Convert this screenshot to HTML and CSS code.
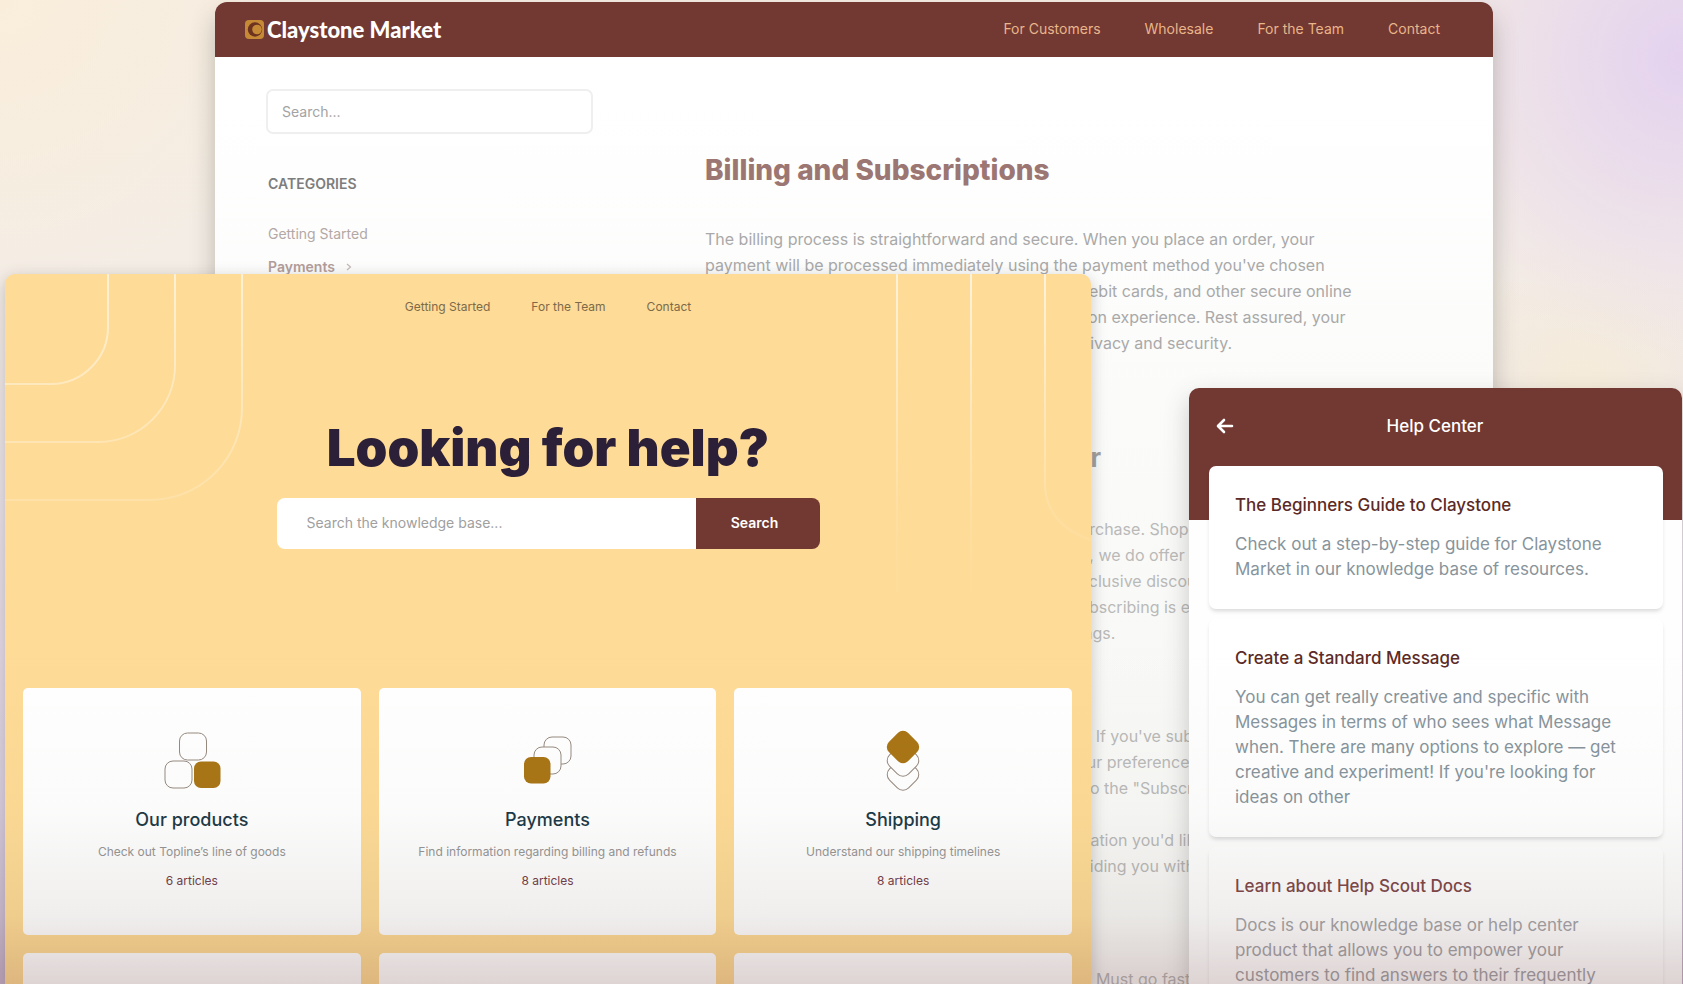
FILE: index.html
```html
<!DOCTYPE html>
<html lang="en">
<head>
  <meta charset="UTF-8">
  <meta name="viewport" content="width=device-width, initial-scale=1.0">
  <title>Claystone Market Help</title>
  <link rel="stylesheet" href="styles.css">
</head>
<body>
  <div class="desktop">

    <!-- Article window -->
    <section class="window market">
      <header class="market-header">
        <a href="#" class="logo">
          <svg width="19" height="19" viewBox="0 0 19 19">
            <rect width="19" height="19" rx="4" fill="#c68a36"/>
            <circle cx="10" cy="9.5" r="7.2" fill="#6d3320"/>
            <circle cx="12" cy="9.5" r="4.8" fill="#c68a36"/>
          </svg>
          <span>Claystone Market</span>
        </a>
        <nav class="market-nav">
          <a href="#">For Customers</a>
          <a href="#">Wholesale</a>
          <a href="#">For the Team</a>
          <a href="#">Contact</a>
        </nav>
      </header>
      <div class="market-body">
        <aside class="sidebar">
          <input type="text" class="sidebar-search" placeholder="Search..." aria-label="Search">
          <h2 class="sidebar-title">CATEGORIES</h2>
          <ul class="categories">
            <li><a href="#">Getting Started</a></li>
            <li class="active">
              <a href="#">Payments</a>
              <svg width="6" height="8" viewBox="0 0 6 8" fill="none" stroke="#c4b9b8" stroke-width="1.2"><path d="M1 1l3.5 3L1 7"/></svg>
            </li>
          </ul>
        </aside>
        <article class="article">
          <h1>Billing and Subscriptions</h1>
          <p>The billing process is straightforward and secure. When you place an order, your<br>
            payment will be processed immediately using the payment method you've chosen<br>
            from all the available choices. We take credit and debit cards, and other secure online<br>
            checkout services to ensure you a simple transaction experience. Rest assured, your<br>
            details will be handled under the utmost care for privacy and security.</p>
          <h2>Is any subscription required for</h2>
          <p class="light">A membership is never needed to complete any purchase. Shop<br>
            as much as you wish without any commitment. Still, we do offer<br>
            bundles that offer members priority access plus exclusive discount<br>
            offers across your favourites you love the most. Subscribing is easy,<br>
            simple, flexible and can bring you some great savings.</p>
          <p class="light change">Yes, you can change your order whenever you like. If you've sub<br>
            scribed to our monthly box, feel free to manage your preferences<br>
            in your account. Sign in to your account and head to the "Subscriptions"</p>
          <p class="light contact">Please contact us about if there is any other information you'd like<br>
            to know more about, and we are committed to providing you with</p>
          <p class="light delivery">Packages will be shipped with our trusted couriers. Must go fast</p>
        </article>
      </div>
    </section>

    <!-- Knowledge base window -->
    <section class="window docs">
      <svg class="lines-left" width="240" height="230" viewBox="0 0 240 230" fill="none" stroke="url(#fade-left)" stroke-width="2">
        <defs>
          <linearGradient id="fade-left" gradientUnits="userSpaceOnUse" x1="0" y1="0" x2="0" y2="230">
            <stop offset="0" stop-color="#fff" stop-opacity=".6"/>
            <stop offset="1" stop-color="#fff" stop-opacity=".16"/>
          </linearGradient>
        </defs>
        <path d="M103 0V53A57 57 0 0 1 46 110H0"/>
        <path d="M170 0V91A77 77 0 0 1 93 168H0"/>
        <path d="M237 0V134A92 92 0 0 1 145 226H0"/>
      </svg>
      <svg class="lines-right" width="200" height="340" viewBox="0 0 200 340" fill="none" stroke="url(#fade-right)" stroke-width="2">
        <defs>
          <linearGradient id="fade-right" gradientUnits="userSpaceOnUse" x1="0" y1="0" x2="0" y2="340">
            <stop offset="0" stop-color="#fff" stop-opacity=".65"/>
            <stop offset=".7" stop-color="#fff" stop-opacity=".12"/>
            <stop offset="1" stop-color="#fff" stop-opacity="0"/>
          </linearGradient>
        </defs>
        <path d="M6 0V340"/>
        <path d="M80 0V340"/>
        <path d="M154 0V209C154 238 172 257 200 266"/>
      </svg>
      <nav class="docs-nav">
        <a href="#">Getting Started</a>
        <a href="#">For the Team</a>
        <a href="#">Contact</a>
      </nav>
      <h1 class="docs-title">Looking for help?</h1>
      <form class="docs-search">
        <input type="text" placeholder="Search the knowledge base..." aria-label="Search the knowledge base">
        <button type="button">Search</button>
      </form>
      <div class="cards">
        <a href="#" class="card">
          <svg width="64" height="64" viewBox="0 0 64 64" fill="none" stroke="#978a80">
            <rect x="19.500" y="4" width="27" height="27" rx="8"/>
            <rect x="5" y="32" width="27" height="27" rx="8"/>
            <rect x="34" y="32.5" width="26.5" height="26.5" rx="7" fill="#a97516" stroke="none"/>
          </svg>
          <h2>Our products</h2>
          <p>Check out Topline’s line of goods</p>
          <span>6 articles</span>
        </a>
        <a href="#" class="card">
          <svg width="64" height="64" viewBox="0 0 64 64" stroke="#978a80">
            <rect x="29" y="8" width="27" height="27" rx="8" fill="#fff"/>
            <rect x="19" y="18" width="27" height="27" rx="8" fill="#fff"/>
            <rect x="9" y="28" width="26.5" height="26.5" rx="7" fill="#a97516" stroke="none"/>
          </svg>
          <h2>Payments</h2>
          <p>Find information regarding billing and refunds</p>
          <span>8 articles</span>
        </a>
        <a href="#" class="card">
          <svg width="64" height="64" viewBox="0 0 64 64" stroke="#978a80">
            <rect x="18.5" y="32" width="27" height="27" rx="8" fill="#fff" transform="rotate(45 32 45.5)"/>
            <rect x="18.5" y="18" width="27" height="27" rx="8" fill="#fff" transform="rotate(45 32 31.5)"/>
            <rect x="18.5" y="4.5" width="27" height="27" rx="7" fill="#a97516" stroke="none" transform="rotate(45 32 18)"/>
          </svg>
          <h2>Shipping</h2>
          <p>Understand our shipping timelines</p>
          <span>8 articles</span>
        </a>
        <div class="card"></div>
        <div class="card"></div>
        <div class="card"></div>
      </div>
    </section>

    <!-- Help center widget -->
    <section class="window help">
      <header class="help-header">
        <button type="button" class="back" aria-label="Back">
          <svg width="18" height="16" viewBox="0 0 18 16" fill="none" stroke="#fff" stroke-width="2.6" stroke-linecap="round" stroke-linejoin="round"><path d="M8 2L2 8l6 6M2.500 8H16"/></svg>
        </button>
        <h2>Help Center</h2>
      </header>
      <div class="help-list">
        <a href="#" class="help-card">
          <h3>The Beginners Guide to Claystone</h3>
          <p>Check out a step-by-step guide for Claystone Market in our knowledge base of resources.</p>
        </a>
        <a href="#" class="help-card">
          <h3>Create a Standard Message</h3>
          <p>You can get really creative and specific with Messages in terms of who sees what Message when. There are many options to explore — get creative and experiment! If you're looking for ideas on other</p>
        </a>
        <a href="#" class="help-card faded">
          <h3>Learn about Help Scout Docs</h3>
          <p>Docs is our knowledge base or help center product that allows you to empower your customers to find answers to their frequently</p>
        </a>
      </div>
    </section>

    <div class="shade"></div>
  </div>
</body>
</html>
```
FILE: styles.css
```css
* {
  box-sizing: border-box;
}

body {
  margin: 0;
  font-family: Inter, "Liberation Sans", sans-serif;
}

h1, h2, h3, p, ul {
  margin: 0;
  padding: 0;
}

a {
  color: inherit;
  text-decoration: none;
}

input, button {
  font-family: inherit;
  border: none;
  outline: none;
}

.desktop {
  position: relative;
  height: 100vh;
  overflow: hidden;
  background:
    radial-gradient(circle at 100% 6%, #e4d2ef 0, rgba(228, 210, 239, 0) 300px),
    radial-gradient(circle at 0 0, #faeedb 0, rgba(250, 238, 219, 0) 300px),
    radial-gradient(circle at 94% 40%, #f6ecd9 0, rgba(246, 236, 217, 0) 160px),
    linear-gradient(to bottom, #f5ede3 0, #f4ede6 28%, #eae2e8 50%, #dfd4e4 80%, #d2c0da 100%);
}

.window {
  position: absolute;
  bottom: 0;
  overflow: hidden;
}

/* market */

.market {
  top: 2px;
  left: 215px;
  right: 190px;
  border-radius: 12px 12px 0 0;
  background: linear-gradient(to bottom, #fff 10%, #fbfbfa 40%, #f8f8f6 70%);
  box-shadow: 0 14px 24px rgba(70, 70, 60, 0.32);
}

.market-header {
  display: flex;
  align-items: center;
  justify-content: space-between;
  height: 55px;
  padding: 0 53px 0 30px;
  background: #723832;
}

.logo {
  display: flex;
  align-items: center;
  gap: 3px;
  font-family: Lato, Inter, sans-serif;
  font-size: 22px;
  font-weight: 900;
  color: #fff;
}

.market-nav {
  display: flex;
  gap: 44px;
  padding-bottom: 2px;
  font-size: 14px;
  color: #e9b58a;
}

.market-body {
  display: flex;
  gap: 112px;
  padding: 32px 0 0 51px;
}

.sidebar {
  flex: none;
  width: 327px;
}

.sidebar-search {
  width: 100%;
  height: 45px;
  padding: 0 14px;
  border: 2px solid #efefef;
  border-radius: 7px;
  background: #fff;
  font-size: 14px;
}

.sidebar-search::placeholder {
  color: #a3a3a3;
}

.sidebar-title {
  margin: 40px 0 30px 2px;
  font-size: 14px;
  line-height: 20px;
  font-weight: 600;
  color: #7d7d7d;
}

.categories {
  display: flex;
  flex-direction: column;
  gap: 13px;
  margin-left: 2px;
  list-style: none;
  font-size: 14px;
  line-height: 20px;
  color: #b3a8a6;
}

.categories .active {
  display: flex;
  align-items: center;
  gap: 11px;
  font-weight: 600;
  color: #b39d9b;
}

.article {
  flex: 1;
  padding-top: 64px;
  font-size: 16px;
  line-height: 26px;
  white-space: nowrap;
  color: #a9a9a9;
}

.article h1 {
  margin-bottom: 39px;
  font-size: 28px;
  line-height: 34px;
  font-weight: 800;
  color: #9c7672;
}

.article h2 {
  margin: 85px 0 41px;
  font-size: 26px;
  line-height: 34px;
  font-weight: 700;
  color: #a0a0a0;
}

.article .light {
  color: #b9b9b8;
}

.article .change {
  margin-top: 77px;
}

.article .contact {
  margin-top: 26px;
}

.article .delivery {
  margin-top: 87px;
}

/* knowledge base */

.docs {
  top: 274px;
  left: 5px;
  right: 592px;
  border-radius: 10px 10px 0 0;
  background: #fedb96;
  box-shadow: 0 4px 16px rgba(60, 60, 60, 0.28);
}

.lines-left {
  position: absolute;
  top: 0;
  left: 0;
}

.lines-right {
  position: absolute;
  top: 0;
  right: 0;
}

.docs-nav {
  display: flex;
  justify-content: center;
  gap: 41px;
  padding-top: 25px;
  font-size: 12px;
  line-height: 16px;
  color: #7d6a49;
}

.docs-title {
  margin-top: 103px;
  font-size: 51px;
  line-height: 60px;
  font-weight: 900;
  text-align: center;
  color: #2c2039;
}

.docs-search {
  display: flex;
  width: 50%;
  height: 51px;
  margin: 20px auto 139px;
  border-radius: 8px;
  overflow: hidden;
}

.docs-search input {
  flex: 1;
  min-width: 0;
  padding: 0 30px 2px;
  background: #fff;
  font-size: 14px;
}

.docs-search input::placeholder {
  color: #a0a0a0;
}

.docs-search button {
  width: 124px;
  padding: 0 6px 2px 0;
  background: #723832;
  font-size: 14px;
  font-weight: 600;
  color: #fff;
}

.cards {
  display: grid;
  grid-template-columns: repeat(3, 1fr);
  gap: 18px;
  padding: 0 19px 0 18px;
}

.card {
  display: flex;
  flex-direction: column;
  align-items: center;
  gap: 13px;
  padding: 41px 10px 46px;
  border-radius: 5px;
  background: #fff;
  font-size: 12px;
  line-height: 16px;
  color: #969696;
}

.card h2 {
  padding-top: 2px;
  font-size: 18px;
  line-height: 23px;
  font-weight: 500;
  color: #1d3a48;
}

.card span {
  color: #74404a;
}

/* help center */

.help {
  top: 388px;
  right: 1px;
  width: 493px;
  border-radius: 10px 10px 0 0;
  background: #fefefe;
  box-shadow: 0 10px 24px rgba(60, 60, 60, 0.26);
}

.help-header {
  display: grid;
  grid-template-columns: 18px 1fr 18px;
  align-items: center;
  padding: 26px 28px 82px 27px;
  background: #723832;
}

.help-header h2 {
  font-size: 17px;
  line-height: 24px;
  font-weight: 500;
  text-align: center;
  color: #fff;
}

.back {
  display: flex;
  padding: 0;
  background: none;
}

.help-list {
  display: flex;
  flex-direction: column;
  gap: 10px;
  margin-top: -54px;
  padding: 0 19px 0 20px;
}

.help-card {
  padding: 27px 24px 27px 26px;
  border-radius: 7px;
  background: #fff;
  box-shadow: 0 3px 4px -1px rgba(60, 60, 60, 0.2);
  font-size: 17px;
  line-height: 25px;
  color: #87949c;
}

.help-card h3 {
  margin-bottom: 15px;
  font-size: 17px;
  line-height: 24px;
  font-weight: 500;
  color: #5c2a26;
}

.help-card.faded {
  color: #a5a5a9;
}

.help-card.faded h3 {
  color: #80494a;
}

/* darkens the lower part of the screen */

.shade {
  position: absolute;
  left: 0;
  right: 0;
  bottom: 0;
  height: 344px;
  pointer-events: none;
  background: linear-gradient(to bottom,
    rgba(50, 50, 30, 0) 0,
    rgba(50, 50, 30, 0.02) 50%,
    rgba(60, 40, 30, 0.08) 80%,
    rgba(72, 16, 16, 0.18) 100%);
}
```
